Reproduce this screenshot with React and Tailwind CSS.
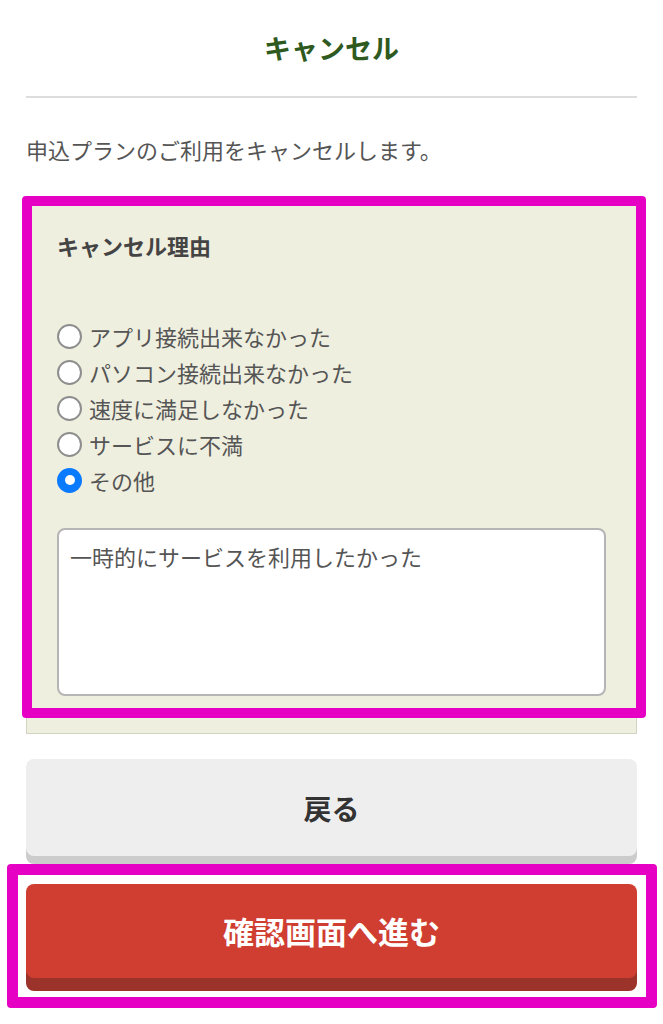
import React from "react";

const reasons = [
  "アプリ接続出来なかった",
  "パソコン接続出来なかった",
  "速度に満足しなかった",
  "サービスに不満",
  "その他",
];

function Radio({ checked }) {
  if (checked) {
    return (
      <span className="w-[25px] h-[25px] rounded-full bg-[#0a7aff] flex items-center justify-center shrink-0">
        <span className="w-[10px] h-[10px] rounded-full bg-white" />
      </span>
    );
  }
  return (
    <span className="w-[25px] h-[25px] rounded-full bg-white border-[2.5px] border-[#8e8e8e] shrink-0" />
  );
}

export default function App() {
  const selected = "その他";

  return (
    <div
      className="relative w-[663px] min-h-[1024px] bg-white px-[26px]"
      style={{ fontFamily: '"Noto Sans CJK JP", "Noto Sans", sans-serif' }}
    >
      <div className="h-[96px] flex items-center justify-center">
        <h1 className="text-[27px] font-bold text-[#2f5a1f]">キャンセル</h1>
      </div>
      <div className="h-[2px] bg-[#dddddd]" />

      <p className="mt-[35px] text-[22px] leading-[32px] text-[#555555] whitespace-nowrap">
        申込プランのご利用をキャンセルします。
      </p>

      <div className="mt-[39px] bg-[#efefdf] border border-[#d3d3c3] px-[30px] pt-[24px] pb-[37px]">
        <h2 className="text-[22px] leading-[32px] font-bold text-[#444444]">
          キャンセル理由
        </h2>

        <div className="mt-[57px] flex flex-col">
          {reasons.map((r) => (
            <label key={r} className="h-[36px] flex items-center gap-[7px]">
              <Radio checked={r === selected} />
              <span className="text-[22px] text-[#555555] whitespace-nowrap">{r}</span>
            </label>
          ))}
        </div>

        <div className="mt-[30px] h-[168px] bg-white border-2 border-[#b5b5b5] rounded-[8px] px-[11px] pt-[9px]">
          <span className="text-[22px] leading-[34px] text-[#555555]">
            一時的にサービスを利用したかった
          </span>
        </div>
      </div>

      <div className="pt-[25px] flex flex-col gap-[28px]">
        <button className="w-full h-[97px] rounded-[8px] bg-[#eeeeee] shadow-[0_8px_0_#cccccc] flex items-center justify-center">
          <span className="text-[28px] font-bold text-[#333333]">戻る</span>
        </button>

        <button className="w-full h-[94px] rounded-[8px] bg-[#cf3e30] shadow-[0_13px_0_#9c332b] flex items-center justify-center">
          <span className="text-[31px] font-bold text-white">確認画面へ進む</span>
        </button>
      </div>

      <div className="absolute left-[22px] top-[196px] w-[624px] h-[522px] border-[10px] border-[#e600c4] rounded-[4px] pointer-events-none" />
      <div className="absolute left-[7px] top-[864px] w-[650px] h-[144px] border-[11px] border-[#e600c4] rounded-[4px] pointer-events-none" />
    </div>
  );
}
